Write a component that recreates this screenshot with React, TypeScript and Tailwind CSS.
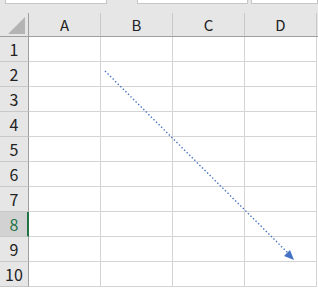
const cols = ["A", "B", "C", "D"];
const rows = [1, 2, 3, 4, 5, 6, 7, 8, 9, 10];

export default function App() {
  return (
    <div className="relative h-[290px] w-[318px] overflow-hidden bg-white font-['Noto_Sans_CJK_JP','Liberation_Sans',sans-serif]">
      {/* formula bar remains */}
      <div className="flex h-[13px] bg-[#e6e6e6]">
        <div className="ml-[5px] h-[4px] w-[102px] border-x border-b border-[#c6c6c6] bg-white" />
        <div className="ml-[30px] h-[4px] w-[111px] border-x border-b border-[#c6c6c6] bg-white" />
        <div className="ml-[3px] h-[4px] w-[67px] border-x border-b border-[#c6c6c6] bg-white" />
      </div>

      {/* column headers */}
      <div className="flex h-[24px] border-b border-[#9f9f9f] bg-[#e6e6e6]">
        <div className="relative w-[29px] shrink-0 border-r border-[#9f9f9f]">
          <svg className="absolute left-[8px] top-[4px]" width="17" height="17" viewBox="0 0 17 17">
            <polygon points="17,0 17,17 0,17" fill="#b4b4b4" />
          </svg>
        </div>
        {cols.map((c) => (
          <div
            key={c}
            className="flex w-[72px] shrink-0 items-center justify-center border-r border-[#c8c8c8] text-[15px] leading-none text-[#222]"
          >
            {c}
          </div>
        ))}
      </div>

      {/* rows */}
      {rows.map((r) => {
        const sel = r === 8;
        return (
          <div key={r} className="flex h-[25px]">
            <div
              className={
                sel
                  ? "flex w-[29px] shrink-0 items-center justify-center border-b border-r-2 border-b-[#c8c8c8] border-r-[#217346] bg-[#d2d2d2] pl-[1px] text-[16px] leading-none text-[#217346]"
                  : "flex w-[29px] shrink-0 items-center justify-center border-b border-r border-b-[#c8c8c8] border-r-[#9f9f9f] bg-[#e6e6e6] text-[16px] leading-none text-[#222]"
              }
            >
              {r}
            </div>
            {cols.map((c) => (
              <div key={c} className="w-[72px] shrink-0 border-b border-r border-[#d4d4d4]" />
            ))}
          </div>
        );
      })}

      {/* dotted arrow shape */}
      <svg className="absolute left-0 top-0" width="318" height="290" viewBox="0 0 318 290">
        <line
          x1="105"
          y1="71"
          x2="291"
          y2="256"
          stroke="#4472c4"
          strokeWidth="1.4"
          strokeDasharray="1.4 2.2"
        />
        <polygon points="294,260 284,256 290,250" fill="#4472c4" />
      </svg>
    </div>
  );
}
